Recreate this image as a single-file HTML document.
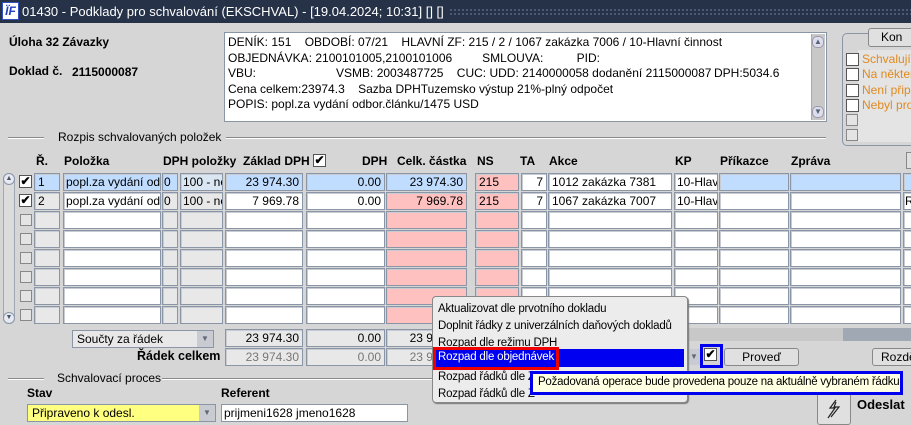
<!DOCTYPE html>
<html><head><meta charset="utf-8"><style>
*{box-sizing:border-box;margin:0;padding:0}
body{width:911px;height:423px;overflow:hidden;background:#d6d6d6;font-family:"Liberation Sans",Arial,sans-serif;font-size:12px;color:#000;position:relative}
.a{position:absolute}
.f{position:absolute;height:18px;border:1px solid #8a96a6;box-shadow:inset 1px 1px 0 #c8ccd2;background:#fff;font-size:12px;line-height:16px;padding:0 3px;white-space:nowrap;overflow:hidden}
.r{text-align:right}
.g{background:#e8e8e8}
.p{background:#ffc0c0}
.b{background:#c0ddff}
.h{position:absolute;font-weight:bold;font-size:12px;top:154px}
.cb{position:absolute;width:12px;height:12px;border:1px solid #888;background:#e4e4e4}
.ck{position:absolute;width:13px;height:13px;border:1px solid #555;background:#fff;font-size:12px;line-height:11px;text-align:center;font-weight:bold}
.lbl{font-weight:bold;font-size:12px}
.mi{position:absolute;left:438px;font-size:11.5px;letter-spacing:-0.2px;white-space:nowrap}
.ln{position:absolute;height:2px;border-top:1px solid #8a8a8a;border-bottom:1px solid #fff}
.row{position:absolute;left:0;width:911px;height:18px}
.row .f{top:0}
.row .cb{top:3px;left:20px}
</style></head><body>
<div class="a" style="left:0;top:0;width:911px;height:23px;background:#263248"></div>
<div class="a" style="left:2px;top:2px;width:17px;height:18px;background:#fff;border:1px solid #3050c0;color:#2040c0;font-weight:bold;font-style:italic;font-size:12px;line-height:16px;text-align:center">ÏF</div>
<div class="a" style="left:425px;top:8px;width:486px;height:8px;background-image:radial-gradient(#5a6680 1px,transparent 1px);background-size:4px 4px"></div>
<div class="a" style="left:22px;top:4px;color:#fff;font-size:13px;white-space:nowrap;background:#263248;padding-right:4px">01430 - Podklady pro schvalování (EKSCHVAL) - [19.04.2024; 10:31] [] []</div>

<div class="a lbl" style="left:9px;top:35px">Úloha 32 Závazky</div>
<div class="a lbl" style="left:9px;top:64px">Doklad č.</div>
<div class="a lbl" style="left:72px;top:65px">2115000087</div>

<div class="a" style="left:224px;top:32px;width:603px;height:90px;background:#fff;border:1px solid #8a96a6;font-size:12px;line-height:15.5px;padding:2px 3px;overflow:hidden">
<div style="white-space:pre">DENÍK: 151    OBDOBÍ: 07/21    HLAVNÍ ZF: 215 / 2 / 1067 zakázka 7006 / 10-Hlavní činnost</div>
<div style="white-space:pre">OBJEDNÁVKA: 2100101005,2100101006         SMLOUVA:          PID:</div>
<div style="white-space:pre">VBU:                        VSMB: 2003487725    CUC: UDD: 2140000058 dodanění 2115000087<span style="display:inline-block;width:0"></span><span style="position:absolute;left:489px">DPH:5034.6</span></div>
<div style="white-space:pre">Cena celkem:23974.3    Sazba DPHTuzemsko výstup 21%-plný odpočet</div>
<div>POPIS: popl.za vydání odbor.článku/1475 USD</div>
</div>
<div class="a" style="left:811px;top:34px;width:14px;height:86px;background:#c8c8c8;border-left:1px solid #aaa"></div>
<div class="a" style="left:812px;top:36px;width:12px;height:12px;border-radius:5px;background:#dde;border:1px solid #99a;font-size:8px;line-height:10px;text-align:center;color:#567">▲</div>
<div class="a" style="left:812px;top:106px;width:12px;height:12px;border-radius:5px;background:#dde;border:1px solid #99a;font-size:8px;line-height:10px;text-align:center;color:#567">▼</div>

<div class="a" style="left:842px;top:33px;width:80px;height:113px;border:1px solid #8a96a6;border-radius:5px"></div>
<div class="a" style="left:858px;top:50px;width:60px;height:92px;background:#e4e4e4"></div>
<div class="a" style="left:868px;top:28px;width:50px;height:19px;background:#e0e0e0;border:1px solid #888;border-radius:3px;padding-left:12px;line-height:17px">Kon</div>
<div class="ck" style="left:846px;top:53px"></div>
<div class="ck" style="left:846px;top:68px"></div>
<div class="ck" style="left:846px;top:84px"></div>
<div class="ck" style="left:846px;top:99px"></div>
<div class="cb" style="left:846px;top:114px"></div>
<div class="cb" style="left:846px;top:129px"></div>
<div class="a" style="left:862px;top:52px;width:49px;overflow:hidden;color:#e08a20;line-height:15.3px;white-space:nowrap">Schvalující<br>Na některé<br>Není připoj<br>Nebyl prov</div>

<div class="ln" style="left:8px;top:137px;width:36px"></div>
<div class="a" style="left:58px;top:130px;white-space:nowrap">Rozpis schvalovaných položek</div>
<div class="ln" style="left:226px;top:137px;width:600px"></div>

<div class="h" style="left:36px">Ř.</div>
<div class="h" style="left:64px">Položka</div>
<div class="h" style="left:163px">DPH položky</div>
<div class="h" style="left:243px">Základ DPH</div>
<div class="ck" style="left:313px;top:154px">✔</div>
<div class="h" style="left:362px">DPH</div>
<div class="h" style="left:397px">Celk. částka</div>
<div class="h" style="left:477px">NS</div>
<div class="h" style="left:520px">TA</div>
<div class="h" style="left:549px">Akce</div>
<div class="h" style="left:675px">KP</div>
<div class="h" style="left:720px">Příkazce</div>
<div class="h" style="left:791px">Zpráva</div>
<div class="a" style="left:906px;top:152px;width:8px;height:17px;border:1px solid #888;background:#e0e0e0"></div>

<div class="a" style="left:3px;top:173px;width:12px;height:151px;border:1px solid #a0a8b4;border-radius:6px;background:#dcdcdc"></div>
<div class="a" style="left:3px;top:173px;width:12px;height:12px;border-radius:6px;background:#e8e8f0;border:1px solid #8896a8;font-size:7px;text-align:center;line-height:10px;color:#456">▲</div>
<div class="a" style="left:3px;top:312px;width:12px;height:12px;border-radius:6px;background:#e8e8f0;border:1px solid #8896a8;font-size:7px;text-align:center;line-height:10px;color:#456">▼</div>

<div class="row" style="top:173px">
<div class="ck" style="left:19px;top:2px">✔</div>
<div class="f b" style="left:34px;width:26px">1</div>
<div class="f b" style="left:63px;width:98px;padding-left:2px">popl.za vydání odbo</div>
<div class="f b" style="left:162px;width:16px;padding:0 1px">0</div>
<div class="f" style="left:180px;width:43px;background:#dae6f2;padding-left:2px">100 - ne</div>
<div class="f b r" style="left:225px;width:78px">23 974.30</div>
<div class="f b r" style="left:306px;width:79px">0.00</div>
<div class="f b r" style="left:386px;width:81px">23 974.30</div>
<div class="f p" style="left:475px;width:44px">215</div>
<div class="f r" style="left:521px;width:26px">7</div>
<div class="f" style="left:548px;width:124px">1012 zakázka 7381</div>
<div class="f" style="left:674px;width:44px;padding-left:2px">10-Hlavn</div>
<div class="f b" style="left:719px;width:70px"></div>
<div class="f b" style="left:790px;width:111px"></div>
<div class="f b" style="left:903px;width:10px"></div>
</div>
<div class="row" style="top:192px">
<div class="ck" style="left:19px;top:2px">✔</div>
<div class="f g" style="left:34px;width:26px">2</div>
<div class="f" style="left:63px;width:98px;padding-left:2px">popl.za vydání odbo</div>
<div class="f g" style="left:162px;width:16px;padding:0 1px">0</div>
<div class="f g" style="left:180px;width:43px;padding-left:2px">100 - ne</div>
<div class="f r" style="left:225px;width:78px">7 969.78</div>
<div class="f r" style="left:306px;width:79px">0.00</div>
<div class="f p r" style="left:386px;width:81px">7 969.78</div>
<div class="f p" style="left:475px;width:44px">215</div>
<div class="f r" style="left:521px;width:26px">7</div>
<div class="f" style="left:548px;width:124px">1067 zakázka 7007</div>
<div class="f" style="left:674px;width:44px;padding-left:2px">10-Hlavn</div>
<div class="f" style="left:719px;width:70px"></div>
<div class="f" style="left:790px;width:111px"></div>
<div class="f" style="left:903px;width:10px;padding:0 1px">R</div>
</div>
<div class="row" style="top:211px"><div class="cb"></div><div class="f g" style="left:34px;width:26px"></div><div class="f" style="left:63px;width:98px"></div><div class="f g" style="left:162px;width:16px"></div><div class="f g" style="left:180px;width:43px"></div><div class="f" style="left:225px;width:78px"></div><div class="f" style="left:306px;width:79px"></div><div class="f p" style="left:386px;width:81px"></div><div class="f p" style="left:475px;width:44px"></div><div class="f" style="left:521px;width:26px"></div><div class="f" style="left:548px;width:124px"></div><div class="f" style="left:674px;width:44px"></div><div class="f" style="left:719px;width:70px"></div><div class="f" style="left:790px;width:111px"></div><div class="f" style="left:903px;width:10px"></div></div>
<div class="row" style="top:230px"><div class="cb"></div><div class="f g" style="left:34px;width:26px"></div><div class="f" style="left:63px;width:98px"></div><div class="f g" style="left:162px;width:16px"></div><div class="f g" style="left:180px;width:43px"></div><div class="f" style="left:225px;width:78px"></div><div class="f" style="left:306px;width:79px"></div><div class="f p" style="left:386px;width:81px"></div><div class="f p" style="left:475px;width:44px"></div><div class="f" style="left:521px;width:26px"></div><div class="f" style="left:548px;width:124px"></div><div class="f" style="left:674px;width:44px"></div><div class="f" style="left:719px;width:70px"></div><div class="f" style="left:790px;width:111px"></div><div class="f" style="left:903px;width:10px"></div></div>
<div class="row" style="top:249px"><div class="cb"></div><div class="f g" style="left:34px;width:26px"></div><div class="f" style="left:63px;width:98px"></div><div class="f g" style="left:162px;width:16px"></div><div class="f g" style="left:180px;width:43px"></div><div class="f" style="left:225px;width:78px"></div><div class="f" style="left:306px;width:79px"></div><div class="f p" style="left:386px;width:81px"></div><div class="f p" style="left:475px;width:44px"></div><div class="f" style="left:521px;width:26px"></div><div class="f" style="left:548px;width:124px"></div><div class="f" style="left:674px;width:44px"></div><div class="f" style="left:719px;width:70px"></div><div class="f" style="left:790px;width:111px"></div><div class="f" style="left:903px;width:10px"></div></div>
<div class="row" style="top:268px"><div class="cb"></div><div class="f g" style="left:34px;width:26px"></div><div class="f" style="left:63px;width:98px"></div><div class="f g" style="left:162px;width:16px"></div><div class="f g" style="left:180px;width:43px"></div><div class="f" style="left:225px;width:78px"></div><div class="f" style="left:306px;width:79px"></div><div class="f p" style="left:386px;width:81px"></div><div class="f p" style="left:475px;width:44px"></div><div class="f" style="left:521px;width:26px"></div><div class="f" style="left:548px;width:124px"></div><div class="f" style="left:674px;width:44px"></div><div class="f" style="left:719px;width:70px"></div><div class="f" style="left:790px;width:111px"></div><div class="f" style="left:903px;width:10px"></div></div>
<div class="row" style="top:287px"><div class="cb"></div><div class="f g" style="left:34px;width:26px"></div><div class="f" style="left:63px;width:98px"></div><div class="f g" style="left:162px;width:16px"></div><div class="f g" style="left:180px;width:43px"></div><div class="f" style="left:225px;width:78px"></div><div class="f" style="left:306px;width:79px"></div><div class="f p" style="left:386px;width:81px"></div><div class="f p" style="left:475px;width:44px"></div><div class="f" style="left:521px;width:26px"></div><div class="f" style="left:548px;width:124px"></div><div class="f" style="left:674px;width:44px"></div><div class="f" style="left:719px;width:70px"></div><div class="f" style="left:790px;width:111px"></div><div class="f" style="left:903px;width:10px"></div></div>
<div class="row" style="top:306px"><div class="cb"></div><div class="f g" style="left:34px;width:26px"></div><div class="f" style="left:63px;width:98px"></div><div class="f g" style="left:162px;width:16px"></div><div class="f g" style="left:180px;width:43px"></div><div class="f" style="left:225px;width:78px"></div><div class="f" style="left:306px;width:79px"></div><div class="f p" style="left:386px;width:81px"></div><div class="f p" style="left:475px;width:44px"></div><div class="f" style="left:521px;width:26px"></div><div class="f" style="left:548px;width:124px"></div><div class="f" style="left:674px;width:44px"></div><div class="f" style="left:719px;width:70px"></div><div class="f" style="left:790px;width:111px"></div><div class="f" style="left:903px;width:10px"></div></div>

<div class="a" style="left:687px;top:328px;width:224px;height:13px;background:#c8c8c8"></div>
<div class="a" style="left:843px;top:328px;width:68px;height:13px;background:#a0a8b4"></div>

<div class="a" style="left:72px;top:330px;width:142px;height:18px;border:1px solid #8a96a6;background:#e8e8e8;line-height:16px;padding-left:4px">Součty za řádek</div>
<div class="a" style="left:197px;top:331px;width:16px;height:16px;background:#c8ccd2;font-size:8px;color:#667;text-align:center;line-height:16px">▼</div>
<div class="f g r" style="left:225px;top:329px;width:78px">23 974.30</div>
<div class="f g r" style="left:306px;top:329px;width:79px">0.00</div>
<div class="f g r" style="left:386px;top:329px;width:81px">23 974.30</div>
<div class="a lbl" style="left:137px;top:349px;font-size:12.5px">Řádek celkem</div>
<div class="f g r" style="left:225px;top:348px;width:78px;color:#777">23 974.30</div>
<div class="f g r" style="left:306px;top:348px;width:79px;color:#777">0.00</div>
<div class="f g r" style="left:386px;top:348px;width:81px;color:#777">23 974.30</div>

<div class="a" style="left:688px;top:349px;width:12px;height:16px;background:#c8ccd2;font-size:8px;color:#667;text-align:center;line-height:16px">▼</div>
<div class="a" style="left:700px;top:344px;width:23px;height:24px;border:3px solid #0000ee"></div>
<div class="ck" style="left:704px;top:348px">✔</div>
<div class="a" style="left:724px;top:348px;width:75px;height:18px;border:1px solid #888;border-radius:3px;background:#e0e0e0;text-align:center;line-height:16px">Proveď</div>
<div class="a" style="left:872px;top:348px;width:50px;height:18px;border:1px solid #888;border-radius:3px;background:#e0e0e0;padding-left:8px;line-height:16px">Rozdě</div>

<div class="ln" style="left:8px;top:378px;width:36px"></div>
<div class="a" style="left:57px;top:371px;white-space:nowrap">Schvalovací proces</div>
<div class="ln" style="left:162px;top:378px;width:272px"></div>
<div class="a lbl" style="left:27px;top:386px">Stav</div>
<div class="a lbl" style="left:221px;top:386px">Referent</div>
<div class="a" style="left:27px;top:404px;width:189px;height:18px;border:1px solid #8a96a6;background:#ffff80;line-height:16px;padding-left:4px">Připraveno k odesl.</div>
<div class="a" style="left:199px;top:405px;width:16px;height:16px;background:#c8ccd2;font-size:8px;color:#667;text-align:center;line-height:16px">▼</div>
<div class="a" style="left:221px;top:404px;width:187px;height:18px;border:1px solid #8a96a6;background:#fff;line-height:16px;padding-left:2px;white-space:nowrap">prijmeni1628 jmeno1628</div>

<div class="a" style="left:817px;top:393px;width:34px;height:32px;border:1px solid #888;border-radius:3px;background:#e0e0e0"></div>
<svg class="a" style="left:822px;top:398px" width="24" height="22"><path d="M14 2 L8 10 L13 10 L6 20 M14 4 L12 9 L17 9 L9 19" stroke="#222" fill="none" stroke-width="1.2"/></svg>
<div class="a lbl" style="left:857px;top:397px;font-size:13px">Odeslat</div>

<div class="a" style="left:432px;top:296px;width:256px;height:107px;background:#ececec;border:1px solid #888;border-radius:4px;box-shadow:1px 1px 1px #777"></div>
<div class="mi" style="top:303px">Aktualizovat dle prvotního dokladu</div>
<div class="mi" style="top:320px">Doplnit řádky z univerzálních daňových dokladů</div>
<div class="mi" style="top:337px">Rozpad dle režimu DPH</div>
<div class="a" style="left:434px;top:349px;width:250px;height:18px;background:#0000f0"></div>
<div class="a" style="left:433px;top:347px;width:126px;height:23px;border:3px solid #ee0000"></div>
<div class="mi" style="top:351px;color:#fff">Rozpad dle objednávek</div>
<div class="mi" style="top:371px">Rozpad řádků dle Z</div>
<div class="mi" style="top:388px">Rozpad řádků dle Z</div>

<div class="a" style="left:530px;top:371px;width:373px;height:24px;border:3px solid #0000ee;background:#ffffe1;padding-left:5px;line-height:17px;font-size:11.5px;letter-spacing:-0.25px;white-space:nowrap;overflow:hidden">Požadovaná operace bude provedena pouze na aktuálně vybraném řádku.</div>
</body></html>
